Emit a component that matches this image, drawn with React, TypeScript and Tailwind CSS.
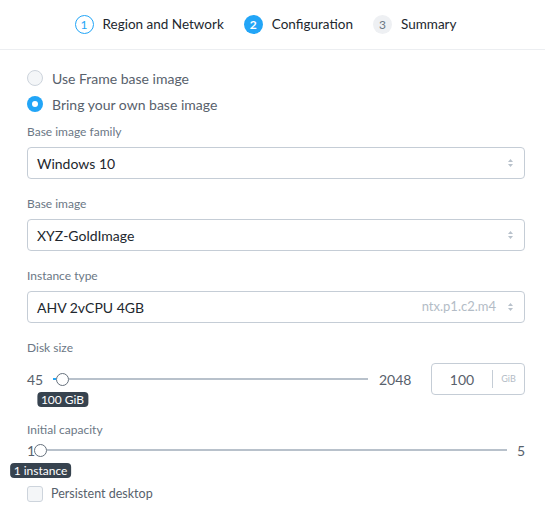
import React from 'react';

const font = { fontFamily: 'Lato, "Open Sans", sans-serif' };

function Step({ n, label, state }: { n: number; label: string; state: 'done' | 'active' | 'todo' }) {
	const circle =
		state === 'done'
			? 'border border-[#22a5f7] bg-white text-[#22a5f7]'
			: state === 'active'
				? 'bg-[#22a5f7] text-white font-bold'
				: 'bg-[#eef0f3] text-[#6b7785]';
	return (
		<div className="flex items-center gap-[9px]">
			<div className={`flex h-[19px] w-[19px] items-center justify-center rounded-full text-[12px] ${circle}`}>
				{n}
			</div>
			<span className="text-[13.5px] text-[#22272e]">{label}</span>
		</div>
	);
}

function Radio({ checked, label }: { checked?: boolean; label: string }) {
	return (
		<div className="flex h-[26px] items-center gap-[9px]">
			{checked ? (
				<div className="flex h-[16px] w-[16px] items-center justify-center rounded-full bg-[#22a5f7]">
					<div className="h-[6px] w-[6px] rounded-full bg-white" />
				</div>
			) : (
				<div className="h-[16px] w-[16px] rounded-full border border-[#cdd4dc] bg-[#f4f6f8]" />
			)}
			<span className="text-[14px] text-[#58616c]">{label}</span>
		</div>
	);
}

function Arrows() {
	return (
		<svg width="7" height="10" viewBox="0 0 7 10" className="shrink-0">
			<path d="M3.5 1 L6 4 H1 Z" fill="#b8c1cb" />
			<path d="M3.5 9 L6 6 H1 Z" fill="#b8c1cb" />
		</svg>
	);
}

function Field({ label, value, hint }: { label: string; value: string; hint?: string }) {
	return (
		<div className="flex flex-col">
			<div className="mb-[7px] h-[16px] text-[12px] leading-[16px] text-[#6b7785]">{label}</div>
			<div className="flex h-[32px] items-center rounded-[4px] border border-[#c5cdd6] pl-[9px] pr-[10px]">
				<span className="flex-1 text-[14px] text-[#22272e]">{value}</span>
				{hint && <span className="mr-[11px] text-[13px] text-[#b3bcc6]">{hint}</span>}
				<Arrows />
			</div>
		</div>
	);
}

function Tip({ text }: { text: string }) {
	return (
		<div className="absolute top-[18px] left-1/2 -translate-x-1/2 whitespace-nowrap rounded-[4px] bg-[#37434f] px-[4px] text-[12px] leading-[15px] text-white">
			{text}
		</div>
	);
}

function Thumb({ tip }: { tip: string }) {
	return (
		<div className="relative h-[13px] w-[13px] shrink-0 rounded-full border border-[#66717d] bg-white">
			<Tip text={tip} />
		</div>
	);
}

export default function App() {
	return (
		<div className="h-[513px] w-[545px] bg-white" style={font}>
			<div className="flex h-[50px] items-center justify-center gap-[20px] border-b border-[#eceef1] pr-[14px]">
				<Step n={1} label="Region and Network" state="done" />
				<Step n={2} label="Configuration" state="active" />
				<Step n={3} label="Summary" state="todo" />
			</div>

			<div className="flex flex-col pl-[27px] pr-[20px]">
				<div className="mt-[15px] flex flex-col">
					<Radio label="Use Frame base image" />
					<Radio checked label="Bring your own base image" />
				</div>

				<div className="mt-[7px] flex flex-col gap-[17px]">
					<Field label="Base image family" value="Windows 10" />
					<Field label="Base image" value="XYZ-GoldImage" />
					<Field label="Instance type" value="AHV 2vCPU 4GB" hint="ntx.p1.c2.m4" />
				</div>

				<div className="mt-[17px] mb-[7px] h-[16px] text-[12px] leading-[16px] text-[#6b7785]">Disk size</div>
				<div className="flex h-[32px] items-center">
					<span className="w-[26px] text-[14px] text-[#58616c]">45</span>
					<div className="flex flex-1 items-center">
						<div className="h-[2px] w-[3px] bg-[#22a5f7]" />
						<Thumb tip="100 GiB" />
						<div className="h-[2px] flex-1 bg-[#b8c1cb]" />
					</div>
					<span className="ml-[11px] w-[52px] text-[14px] text-[#58616c]">2048</span>
					<div className="flex h-[32px] w-[94px] items-center rounded-[4px] border border-[#c5cdd6]">
						<span className="flex-1 text-center text-[14px] text-[#58616c]">100</span>
						<div className="h-[18px] w-px bg-[#c5cdd6]" />
						<span className="w-[31px] text-center text-[9px] text-[#b3bcc6]">GiB</span>
					</div>
				</div>

				<div className="mt-[27px] mb-[5px] h-[16px] text-[12px] leading-[16px] text-[#6b7785]">Initial capacity</div>
				<div className="flex h-[14px] items-center">
					<span className="w-[7px] text-[14px] text-[#58616c]">1</span>
					<Thumb tip="1 instance" />
					<div className="h-[2px] flex-1 bg-[#b8c1cb]" />
					<span className="ml-[10px] text-[14px] text-[#58616c]">5</span>
				</div>

				<div className="mt-[28px] flex items-center gap-[8px]">
					<div className="h-[16px] w-[16px] rounded-[3px] border border-[#cdd4dc] bg-[#f4f6f8]" />
					<span className="text-[12.5px] text-[#58616c]">Persistent desktop</span>
				</div>
			</div>
		</div>
	);
}
